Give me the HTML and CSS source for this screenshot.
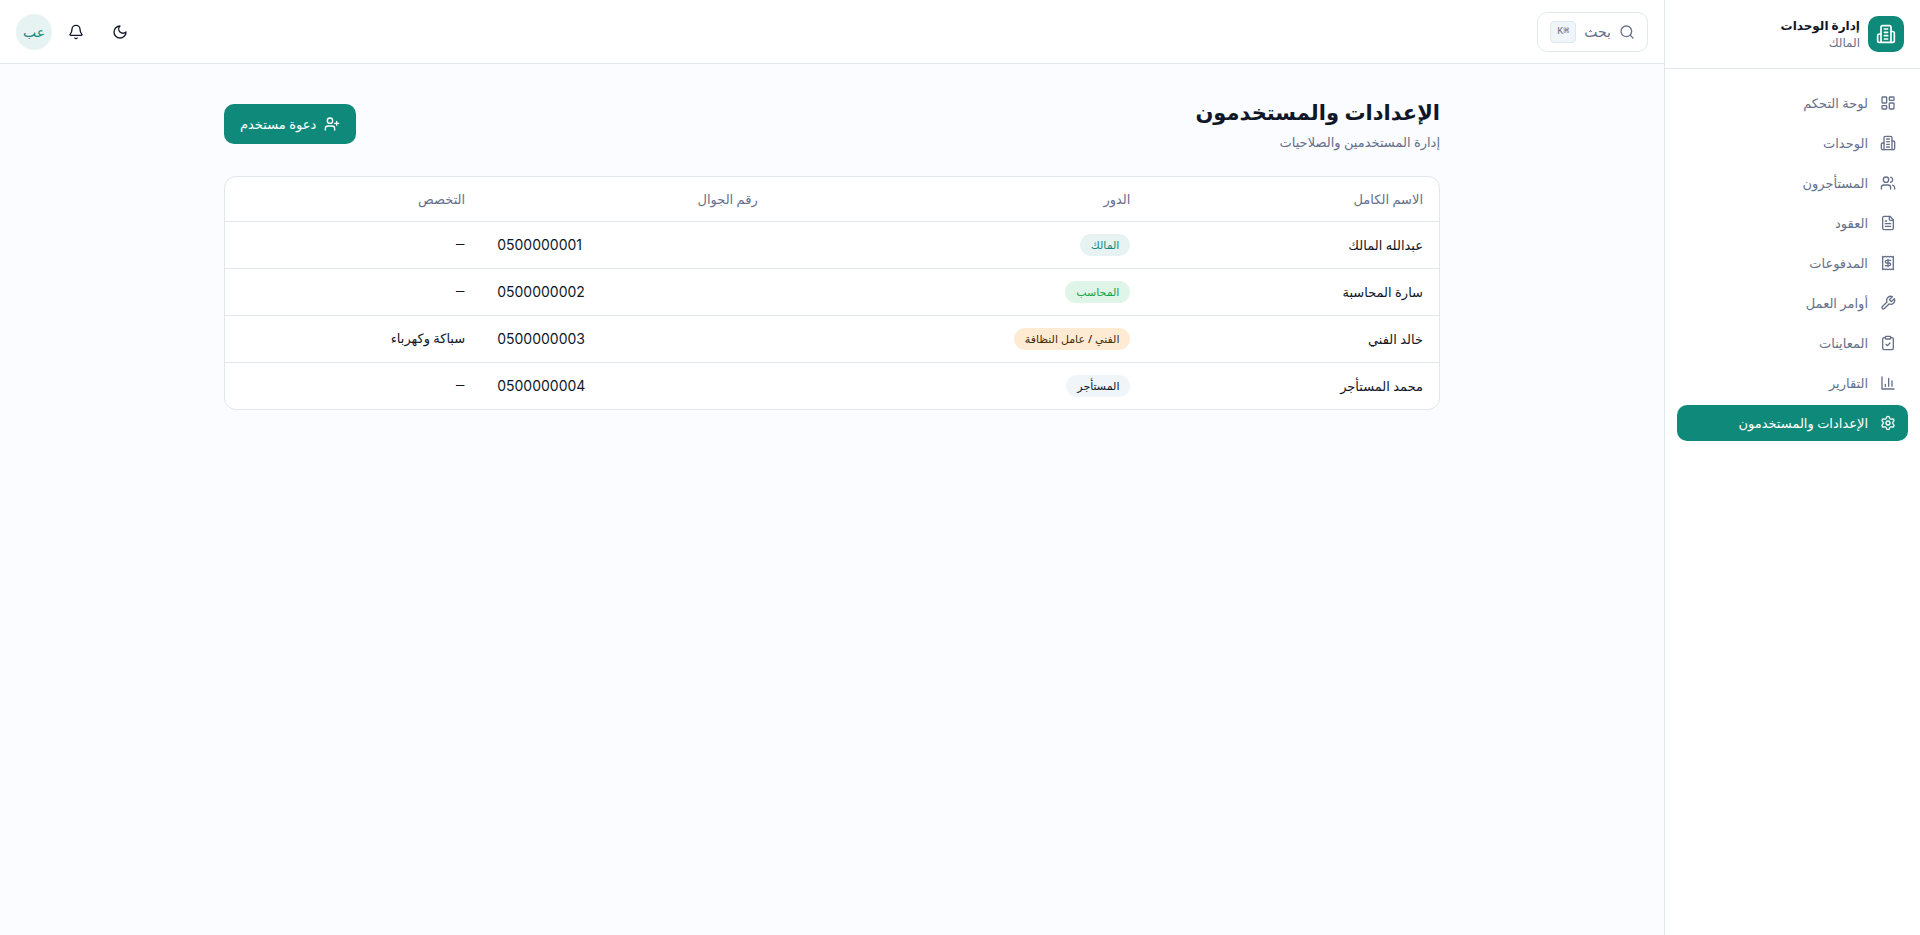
FILE: index.html
```html
<!DOCTYPE html>
<html lang="ar" dir="rtl">
<head>
<meta charset="utf-8">
<meta name="viewport" content="width=device-width, initial-scale=1">
<title>الإعدادات والمستخدمون</title>
<link rel="stylesheet" href="styles.css">
</head>
<body>
<svg class="sprite" aria-hidden="true">
  <symbol id="building" viewBox="0 0 24 24"><path d="M6 22V4a2 2 0 0 1 2-2h8a2 2 0 0 1 2 2v18Z"/><path d="M6 12H4a2 2 0 0 0-2 2v6a2 2 0 0 0 2 2h2"/><path d="M18 9h2a2 2 0 0 1 2 2v9a2 2 0 0 1-2 2h-2"/><path d="M10 6h4M10 10h4M10 14h4M10 18h4"/></symbol>
  <symbol id="dashboard" viewBox="0 0 24 24"><rect x="3" y="3" width="7" height="9" rx="1"/><rect x="14" y="3" width="7" height="5" rx="1"/><rect x="14" y="12" width="7" height="9" rx="1"/><rect x="3" y="16" width="7" height="5" rx="1"/></symbol>
  <symbol id="users" viewBox="0 0 24 24"><path d="M16 21v-2a4 4 0 0 0-4-4H6a4 4 0 0 0-4 4v2"/><circle cx="9" cy="7" r="4"/><path d="M22 21v-2a4 4 0 0 0-3-3.87M16 3.13a4 4 0 0 1 0 7.75"/></symbol>
  <symbol id="file" viewBox="0 0 24 24"><path d="M15 2H6a2 2 0 0 0-2 2v16a2 2 0 0 0 2 2h12a2 2 0 0 0 2-2V7Z"/><path d="M14 2v4a2 2 0 0 0 2 2h4M10 9H8M16 13H8M16 17H8"/></symbol>
  <symbol id="receipt" viewBox="0 0 24 24"><path d="M4 2v20l2-1 2 1 2-1 2 1 2-1 2 1 2-1 2 1V2l-2 1-2-1-2 1-2-1-2 1-2-1-2 1Z"/><path d="M16 8h-6a2 2 0 1 0 0 4h4a2 2 0 1 1 0 4H8M12 17.5v-11"/></symbol>
  <symbol id="wrench" viewBox="0 0 24 24"><path d="M14.7 6.3a1 1 0 0 0 0 1.4l1.6 1.6a1 1 0 0 0 1.4 0l3.77-3.77a6 6 0 0 1-7.94 7.94l-6.91 6.91a2.12 2.12 0 0 1-3-3l6.91-6.91a6 6 0 0 1 7.94-7.94l-3.76 3.76z"/></symbol>
  <symbol id="clipboard" viewBox="0 0 24 24"><rect x="8" y="2" width="8" height="4" rx="1"/><path d="M16 4h2a2 2 0 0 1 2 2v14a2 2 0 0 1-2 2H6a2 2 0 0 1-2-2V6a2 2 0 0 1 2-2h2M9 14l2 2 4-4"/></symbol>
  <symbol id="chart" viewBox="0 0 24 24"><path d="M3 3v18h18M18 17V9M13 17V5M8 17v-3"/></symbol>
  <symbol id="settings" viewBox="0 0 24 24"><path d="M9.671 4.136a2.34 2.34 0 0 1 4.659 0 2.34 2.34 0 0 0 3.319 1.915 2.34 2.34 0 0 1 2.33 4.033 2.34 2.34 0 0 0 0 3.831 2.34 2.34 0 0 1-2.33 4.033 2.34 2.34 0 0 0-3.319 1.915 2.34 2.34 0 0 1-4.659 0 2.34 2.34 0 0 0-3.32-1.915 2.34 2.34 0 0 1-2.33-4.033 2.34 2.34 0 0 0 0-3.831A2.34 2.34 0 0 1 6.35 6.051a2.34 2.34 0 0 0 3.319-1.915"/><circle cx="12" cy="12" r="3"/></symbol>
  <symbol id="search" viewBox="0 0 24 24"><circle cx="11" cy="11" r="8"/><path d="m21 21-4.3-4.3"/></symbol>
  <symbol id="moon" viewBox="0 0 24 24"><path d="M12 3a6 6 0 0 0 9 9 9 9 0 1 1-9-9Z"/></symbol>
  <symbol id="bell" viewBox="0 0 24 24"><path d="M10.268 21a2 2 0 0 0 3.464 0M3.262 15.326A1 1 0 0 0 4 17h16a1 1 0 0 0 .74-1.673C19.41 13.956 18 12.499 18 8A6 6 0 0 0 6 8c0 4.499-1.411 5.956-2.738 7.326"/></symbol>
  <symbol id="user-plus" viewBox="0 0 24 24"><path d="M16 21v-2a4 4 0 0 0-4-4H6a4 4 0 0 0-4 4v2"/><circle cx="9" cy="7" r="4"/><path d="M19 8v6M22 11h-6"/></symbol>
</svg>
<div class="app">
  <aside class="sidebar">
    <div class="brand">
      <span class="brand-logo"><svg class="icon icon-lg"><use href="#building"/></svg></span>
      <div class="brand-text">
        <span class="brand-name">إدارة الوحدات</span>
        <span class="brand-role">المالك</span>
      </div>
    </div>
    <nav class="nav">
      <a class="nav-link" href="#"><svg class="icon"><use href="#dashboard"/></svg>لوحة التحكم</a>
      <a class="nav-link" href="#"><svg class="icon"><use href="#building"/></svg>الوحدات</a>
      <a class="nav-link" href="#"><svg class="icon"><use href="#users"/></svg>المستأجرون</a>
      <a class="nav-link" href="#"><svg class="icon"><use href="#file"/></svg>العقود</a>
      <a class="nav-link" href="#"><svg class="icon"><use href="#receipt"/></svg>المدفوعات</a>
      <a class="nav-link" href="#"><svg class="icon"><use href="#wrench"/></svg>أوامر العمل</a>
      <a class="nav-link" href="#"><svg class="icon"><use href="#clipboard"/></svg>المعاينات</a>
      <a class="nav-link" href="#"><svg class="icon"><use href="#chart"/></svg>التقارير</a>
      <a class="nav-link active" href="#" aria-current="page"><svg class="icon"><use href="#settings"/></svg>الإعدادات والمستخدمون</a>
    </nav>
  </aside>
  <div class="content">
    <header class="topbar">
      <button class="search" type="button"><svg class="icon"><use href="#search"/></svg><span>بحث</span><kbd>⌘K</kbd></button>
      <div class="actions">
        <button class="icon-button" type="button" aria-label="الوضع الداكن"><svg class="icon"><use href="#moon"/></svg></button>
        <button class="icon-button" type="button" aria-label="الإشعارات"><svg class="icon"><use href="#bell"/></svg></button>
        <button class="avatar" type="button">عب</button>
      </div>
    </header>
    <main class="page">
      <div class="page-head">
        <div>
          <h1>الإعدادات والمستخدمون</h1>
          <p class="subtitle">إدارة المستخدمين والصلاحيات</p>
        </div>
        <button class="primary" type="button"><svg class="icon"><use href="#user-plus"/></svg>دعوة مستخدم</button>
      </div>
      <div class="card">
        <table>
          <colgroup><col class="col-name"><col class="col-role"><col class="col-phone"><col></colgroup>
          <thead>
            <tr><th scope="col">الاسم الكامل</th><th scope="col">الدور</th><th scope="col">رقم الجوال</th><th scope="col">التخصص</th></tr>
          </thead>
          <tbody>
            <tr><td class="name">عبدالله المالك</td><td><span class="badge owner">المالك</span></td><td class="phone" dir="ltr">0500000001</td><td class="specialty">—</td></tr>
            <tr><td class="name">سارة المحاسبة</td><td><span class="badge accountant">المحاسب</span></td><td class="phone" dir="ltr">0500000002</td><td class="specialty">—</td></tr>
            <tr><td class="name">خالد الفني</td><td><span class="badge technician">الفني / عامل النظافة</span></td><td class="phone" dir="ltr">0500000003</td><td class="specialty">سباكة وكهرباء</td></tr>
            <tr><td class="name">محمد المستأجر</td><td><span class="badge tenant">المستأجر</span></td><td class="phone" dir="ltr">0500000004</td><td class="specialty">—</td></tr>
          </tbody>
        </table>
      </div>
    </main>
  </div>
</div>
</body>
</html>
```
FILE: styles.css
```css
:root {
  --bg: #fafcff;
  --surface: #ffffff;
  --text: #0f1729;
  --muted: #65708b;
  --border: #e1e7eb;
  --primary: #0f8a7a;
}

* { box-sizing: border-box; }

body {
  margin: 0;
  background: var(--bg);
  color: var(--text);
  font-family: "Noto Sans", "DejaVu Sans", sans-serif;
  font-size: 13px;
  line-height: 20px;
}

button {
  font: inherit;
  cursor: pointer;
}

.sprite { position: absolute; width: 0; height: 0; }

.icon {
  flex: none;
  width: 16px;
  height: 16px;
  fill: none;
  stroke: currentColor;
  stroke-width: 2;
  stroke-linecap: round;
  stroke-linejoin: round;
}

.icon-lg { width: 20px; height: 20px; }

.app { display: flex; min-height: 100vh; }

.sidebar {
  flex: none;
  width: 256px;
  background: var(--surface);
  border-inline-end: 1px solid var(--border);
}

.brand {
  display: flex;
  align-items: center;
  gap: 8px;
  padding: 16px;
  border-bottom: 1px solid var(--border);
}

.brand-logo {
  display: grid;
  place-items: center;
  width: 36px;
  height: 36px;
  border-radius: 10px;
  background: var(--primary);
  color: #fff;
}

.brand-text { display: flex; flex-direction: column; }
.brand-name { font-size: 12px; font-weight: 700; line-height: 18px; }
.brand-role { font-size: 12px; line-height: 16px; color: var(--muted); }

.nav {
  display: flex;
  flex-direction: column;
  gap: 4px;
  padding: 16px 12px;
}

.nav-link {
  display: flex;
  align-items: center;
  gap: 12px;
  padding: 8px 12px;
  border-radius: 10px;
  color: var(--muted);
  font-weight: 500;
  text-decoration: none;
}

.nav-link.active { background: var(--primary); color: #fff; }

.content { flex: 1; min-width: 0; }

.topbar {
  display: flex;
  align-items: center;
  justify-content: space-between;
  height: 64px;
  padding: 0 16px;
  background: var(--surface);
  border-bottom: 1px solid var(--border);
}

.search {
  display: flex;
  align-items: center;
  gap: 8px;
  height: 40px;
  padding: 0 12px;
  border: 1px solid var(--border);
  border-radius: 10px;
  background: var(--surface);
  color: var(--muted);
  font-size: 14px;
}

.search kbd {
  padding: 0 6px;
  border: 1px solid var(--border);
  border-radius: 4px;
  background: #f0f5fa;
  font-family: "Liberation Mono", "DejaVu Sans Mono", monospace;
  font-size: 10px;
}

.actions { display: flex; align-items: center; gap: 4px; }

.icon-button {
  display: grid;
  place-items: center;
  width: 40px;
  height: 40px;
  padding: 0;
  border: 0;
  border-radius: 10px;
  background: none;
  color: var(--text);
}

.avatar {
  width: 36px;
  height: 36px;
  padding: 0;
  border: 0;
  border-radius: 50%;
  background: #e7f3f2;
  color: var(--primary);
  font-size: 14px;
  font-weight: 500;
}

.page {
  max-width: 1280px;
  margin: 0 auto;
  padding: 32px;
}

.page-head {
  display: flex;
  align-items: center;
  justify-content: space-between;
  margin-bottom: 24px;
}

h1 {
  margin: 0 0 4px;
  font-size: 21px;
  line-height: 32px;
  font-weight: 700;
}

.subtitle { margin: 0; color: var(--muted); }

.primary {
  display: flex;
  align-items: center;
  gap: 8px;
  height: 40px;
  padding: 0 16px;
  border: 0;
  border-radius: 10px;
  background: var(--primary);
  color: #fff;
  font-weight: 500;
}

.card {
  overflow: hidden;
  border: 1px solid var(--border);
  border-radius: 12px;
  background: var(--surface);
}

table {
  width: 100%;
  table-layout: fixed;
  border-collapse: collapse;
}

.col-name, .col-phone { width: 24.1%; }
.col-role { width: 30.7%; }

th, td {
  padding: 0 16px;
  text-align: start;
  white-space: nowrap;
}

th { height: 44px; color: var(--muted); font-weight: 500; }
td { height: 47px; border-top: 1px solid var(--border); }

.name { font-weight: 500; }
.phone { font-family: Inter, sans-serif; font-size: 14px; }
.specialty { font-family: Roboto, "DejaVu Sans", sans-serif; }

.badge {
  display: inline-block;
  padding: 3px 11px;
  border-radius: 11px;
  font-size: 11px;
  line-height: 16px;
  font-weight: 500;
}

.owner { background: #e7f3f2; color: var(--primary); }
.accountant { background: #dff5e8; color: #16a34a; }
.technician { background: #ffebd3; color: #422c0b; }
.tenant { background: #f0f5fa; color: var(--text); }
```
